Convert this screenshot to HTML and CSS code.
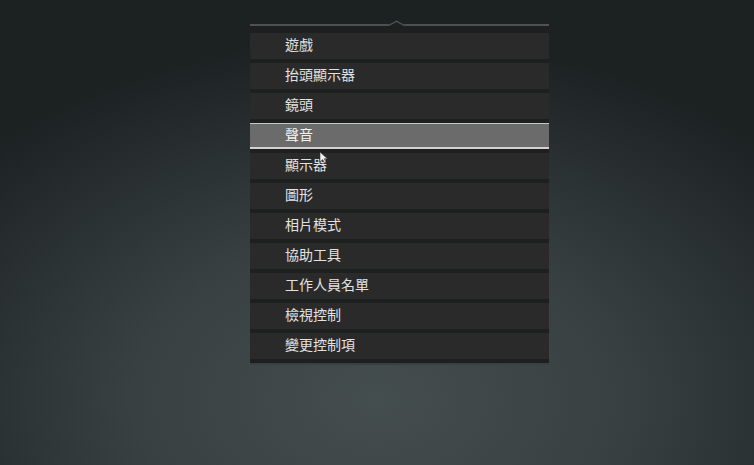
FILE: index.html
```html
<!DOCTYPE html>
<html lang="zh-Hant">
<head>
    <meta charset="UTF-8">
    <meta name="viewport" content="width=device-width, initial-scale=1.0">
    <title>選單</title>
    <link rel="stylesheet" href="styles.css">
</head>
<body>

    <div class="menu">
        <span class="notch"></span>
        <div class="item">遊戲</div>
        <div class="item">抬頭顯示器</div>
        <div class="item">鏡頭</div>
        <div class="item active">聲音</div>
        <div class="item">顯示器</div>
        <div class="item">圖形</div>
        <div class="item">相片模式</div>
        <div class="item">協助工具</div>
        <div class="item">工作人員名單</div>
        <div class="item">檢視控制</div>
        <div class="item">變更控制項</div>

        <svg class="cursor" width="10" height="13" viewBox="0 0 10 13">
            <path d="M1 1 L1 11 L3.5 8.5 L5.5 12 L7 11.3 L5.2 7.8 L8.5 7.8 Z" fill="#f2f2f2" stroke="#333" stroke-width="0.6"/>
        </svg>
    </div>

</body>
</html>
```

FILE: styles.css
```css
html, body { height: 100%; }
body { margin: 0; font-family: "Noto Sans CJK TC", "Noto Sans", sans-serif; background: radial-gradient(ellipse 72% 78% at 50% 86%, #454e4f 0%, #384041 45%, #272d2e 80%, #1c2122 100%); overflow: hidden; }
.menu { position: relative; width: 299px; margin: 24px 0 0 250px; display: flex; flex-direction: column; gap: 4px; padding: 7px 0 4px; background: #1e1f1f; border-top: 2px solid #4b5354; border-bottom: 2px solid #3a3f40; }
.notch { position: absolute; top: -7px; left: 140px; width: 11px; height: 11px; background: #1e1f1f; border-top: 2px solid #4b5354; border-left: 2px solid #4b5354; transform: scaleY(0.55) rotate(45deg); }
.item { box-sizing: border-box; height: 26px; line-height: 23px; padding: 0 0 3px 35px; color: #e2e2e2; font-size: 14px; background: #2a2a2a; }
.item.active { background: #6a6b6a; border-top: 1px solid #c6c6c6; border-bottom: 2px solid #d6cfcf; line-height: 21px; padding-bottom: 1px; color: #f2f2f2; }
.cursor { position: absolute; left: 69px; top: 125px; }
```
